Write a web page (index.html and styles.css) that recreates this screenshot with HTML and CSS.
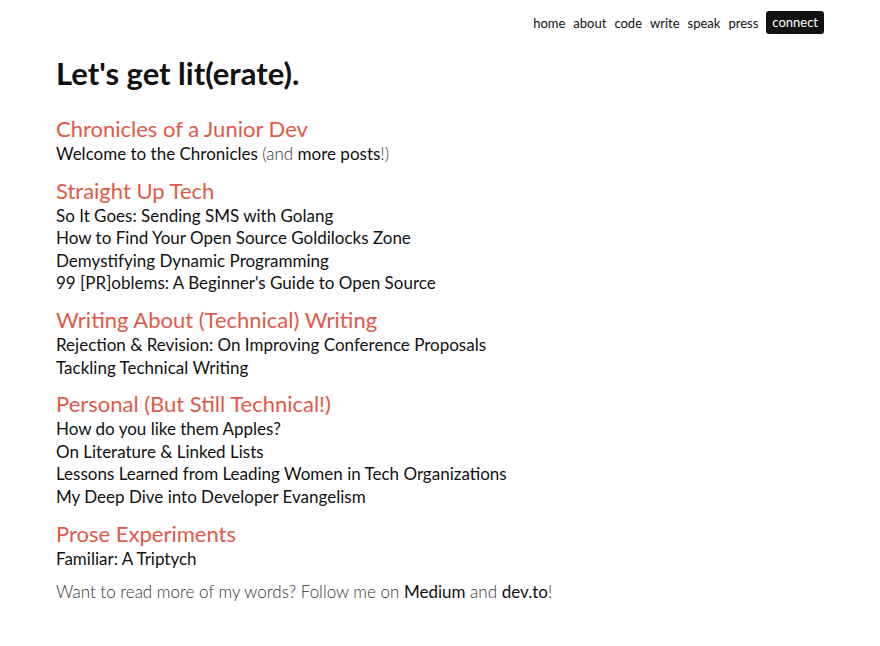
FILE: index.html
```html
<!DOCTYPE html>
<html>
<head>
<meta charset="utf-8">
<link rel="stylesheet" href="styles.css">
</head>
<body>
<nav class="nav">
  <a href="#">home</a>
  <a href="#">about</a>
  <a href="#">code</a>
  <a href="#">write</a>
  <a href="#">speak</a>
  <a href="#">press</a>
  <a href="#" class="btn">connect</a>
</nav>
<main class="main">
  <h1 class="title">Let's get lit(erate).</h1>
  <section class="sec">
    <h2 class="sec-title">Chronicles of a Junior Dev</h2>
    <p class="item">Welcome to the Chronicles <span class="light">(and</span> more posts<span class="light">!)</span></p>
  </section>
  <section class="sec">
    <h2 class="sec-title">Straight Up Tech</h2>
    <p class="item">So It Goes: Sending SMS with Golang</p>
    <p class="item">How to Find Your Open Source Goldilocks Zone</p>
    <p class="item">Demystifying Dynamic Programming</p>
    <p class="item">99 [PR]oblems: A Beginner's Guide to Open Source</p>
  </section>
  <section class="sec">
    <h2 class="sec-title">Writing About (Technical) Writing</h2>
    <p class="item">Rejection &amp; Revision: On Improving Conference Proposals</p>
    <p class="item">Tackling Technical Writing</p>
  </section>
  <section class="sec">
    <h2 class="sec-title">Personal (But Still Technical!)</h2>
    <p class="item">How do you like them Apples?</p>
    <p class="item">On Literature &amp; Linked Lists</p>
    <p class="item">Lessons Learned from Leading Women in Tech Organizations</p>
    <p class="item">My Deep Dive into Developer Evangelism</p>
  </section>
  <section class="sec">
    <h2 class="sec-title">Prose Experiments</h2>
    <p class="item">Familiar: A Triptych</p>
  </section>
  <p class="outro">Want to read more of my words? Follow me on <span class="strong">Medium</span> and <span class="strong">dev.to</span>!</p>
</main>
</body>
</html>
```
FILE: styles.css
```css
html, body { margin: 0; padding: 0; background: #fff; }
body { font-family: Lato, "Noto Sans", sans-serif; color: #111; }
.nav { display: flex; justify-content: flex-end; align-items: center; gap: 8px; padding: 11px 56px 0 0; height: 23px; }
.nav a { color: #111; text-decoration: none; font-size: 13px; }
.nav .btn { background: #111; color: #fff; padding: 3px 6px; border-radius: 3px; line-height: 17px; }
.main { padding: 0 56px; }
.title { margin: 21px 0 24px; font-size: 31px; font-weight: 700; line-height: 36px; }
.sec { margin-bottom: 11px; }
.sec-title { margin: 0; font-size: 22px; font-weight: 400; color: #e05a47; line-height: 28px; }
.item { margin: 0; font-size: 17px; line-height: 22.6px; }
.light { font-weight: 300; color: #333; }
.outro { margin: 3px 0 0; font-size: 17px; font-weight: 300; color: #333; line-height: 22px; }
.strong { font-weight: 400; color: #111; }
```
